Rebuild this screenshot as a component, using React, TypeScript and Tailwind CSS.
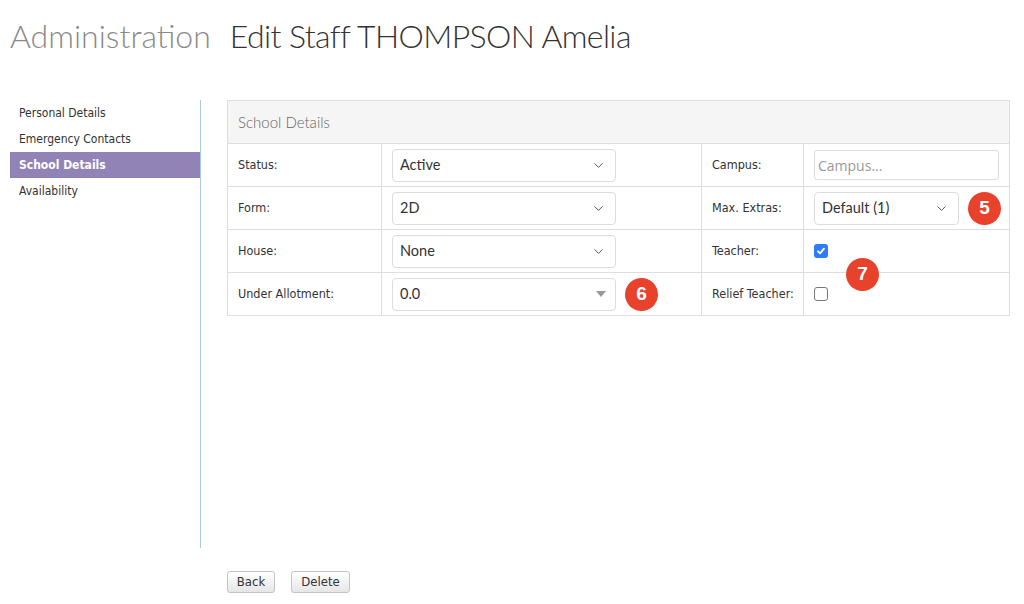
import React from 'react';
import { ChevronDown } from 'lucide-react';

const navItems = [
  { id: 'personal', title: 'Personal Details' },
  { id: 'emergency', title: 'Emergency Contacts' },
  { id: 'school', title: 'School Details' },
  { id: 'availability', title: 'Availability' },
];

const labelFont = "font-['Tahoma','DejaVu_Sans_Condensed','Liberation_Sans',sans-serif]";

const Badge = ({ n }: { n: number }) => (
  <span className="flex h-[33px] w-[33px] items-center justify-center rounded-full bg-[#e8412c] font-['Liberation_Sans',Arial,sans-serif] text-[19px] font-bold text-white">
    {n}
  </span>
);

const Select = ({ value, width, caret }: { value: string; width: string; caret?: boolean }) => (
  <div
    className={`flex h-[33px] items-center justify-between rounded-[4px] border border-[#dcdcdc] bg-white pl-[7px] pr-[9px] ${width}`}
  >
    <span className="font-['Lato',sans-serif] text-[14.5px] text-[#333]">{value}</span>
    {caret ? (
      <span className="h-0 w-0 border-x-[5px] border-t-[6px] border-x-transparent border-t-[#999]" />
    ) : (
      <ChevronDown size={15} strokeWidth={1.6} className="text-[#555]" />
    )}
  </div>
);

const Label = ({ children }: { children: React.ReactNode }) => (
  <div className={`flex items-center pl-[10px] text-[12.5px] text-[#333] ${labelFont}`}>{children}</div>
);

const Cell = ({ children }: { children: React.ReactNode }) => (
  <div className="relative flex items-center pl-[10px]">{children}</div>
);

export default function App() {
  return (
    <div className="h-[604px] w-[1024px] overflow-hidden bg-white">
      <h1 className="flex h-[100px] items-start gap-[19px] pl-[10px] pt-[14px] font-['Lato',sans-serif] text-[32px] font-light leading-[44px]">
        <span className="text-[#8a8a8a]">Administration</span>
        <span className="tracking-[-0.6px] text-[#333]">Edit Staff THOMPSON Amelia</span>
      </h1>

      <div className="flex">
        <nav className={`ml-[10px] h-[448px] w-[191px] border-r border-[#a9cbe0] ${labelFont}`}>
          {navItems.map((item) => (
            <a
              key={item.id}
              href={`#${item.id}`}
              className={`flex h-[26px] items-center pl-[9px] text-[12px] ${
                item.id === 'school' ? 'bg-[#9183b6] font-bold text-white' : 'text-[#333]'
              }`}
            >
              {item.title}
            </a>
          ))}
        </nav>

        <div className="ml-[26px] w-[783px]">
          <div className="border border-[#dedede]">
            <div className="flex h-[42px] items-center bg-[#f5f5f5] pl-[10px] font-['Lato',sans-serif] text-[15px] font-light text-[#666]">
              School Details
            </div>
            <div className="grid grid-cols-[153px_320px_102px_1fr] grid-rows-[43px_43px_43px_43px] [&>*]:border-t [&>*]:border-[#dedede] [&>*:nth-child(4n+2)]:border-l [&>*:nth-child(4n+3)]:border-l [&>*:nth-child(4n+4)]:border-l">
              <Label>Status:</Label>
              <Cell>
                <Select value="Active" width="w-[224px]" />
              </Cell>
              <Label>Campus:</Label>
              <Cell>
                <div className="flex h-[30px] w-[185px] items-center rounded-[3px] border border-[#dcdcdc] pl-[3px] font-['Open_Sans',sans-serif] text-[14px] text-[#999]">
                  Campus...
                </div>
              </Cell>

              <Label>Form:</Label>
              <Cell>
                <Select value="2D" width="w-[224px]" />
              </Cell>
              <Label>Max. Extras:</Label>
              <Cell>
                <Select value="Default (1)" width="w-[145px]" />
                <span className="ml-[9px]">
                  <Badge n={5} />
                </span>
              </Cell>

              <Label>House:</Label>
              <Cell>
                <Select value="None" width="w-[224px]" />
              </Cell>
              <Label>Teacher:</Label>
              <Cell>
                <span className="flex h-[14px] w-[14px] items-center justify-center rounded-[3px] bg-[#2f7cf6]">
                  <svg width="10" height="10" viewBox="0 0 10 10" fill="none">
                    <path d="M2 5.3 4.1 7.4 8 2.6" stroke="white" strokeWidth="1.8" strokeLinecap="round" strokeLinejoin="round" />
                  </svg>
                </span>
                <span className="absolute left-[42px] top-[28px] z-10">
                  <Badge n={7} />
                </span>
              </Cell>

              <Label>Under Allotment:</Label>
              <Cell>
                <Select value="0.0" width="w-[224px]" caret />
                <span className="ml-[9px]">
                  <Badge n={6} />
                </span>
              </Cell>
              <Label>Relief Teacher:</Label>
              <Cell>
                <span className="h-[14px] w-[14px] rounded-[3px] border border-[#777] bg-white" />
              </Cell>
            </div>
          </div>
        </div>
      </div>

      <div className={`mt-[23px] flex gap-[16px] pl-[227px] ${labelFont}`}>
        <button className="h-[22px] w-[48px] rounded-[3px] border border-[#c4c4c4] bg-gradient-to-b from-white to-[#e6e6e6] text-[13px] text-[#333]">
          Back
        </button>
        <button className="h-[22px] w-[59px] rounded-[3px] border border-[#c4c4c4] bg-gradient-to-b from-white to-[#e6e6e6] text-[13px] text-[#333]">
          Delete
        </button>
      </div>
    </div>
  );
}
